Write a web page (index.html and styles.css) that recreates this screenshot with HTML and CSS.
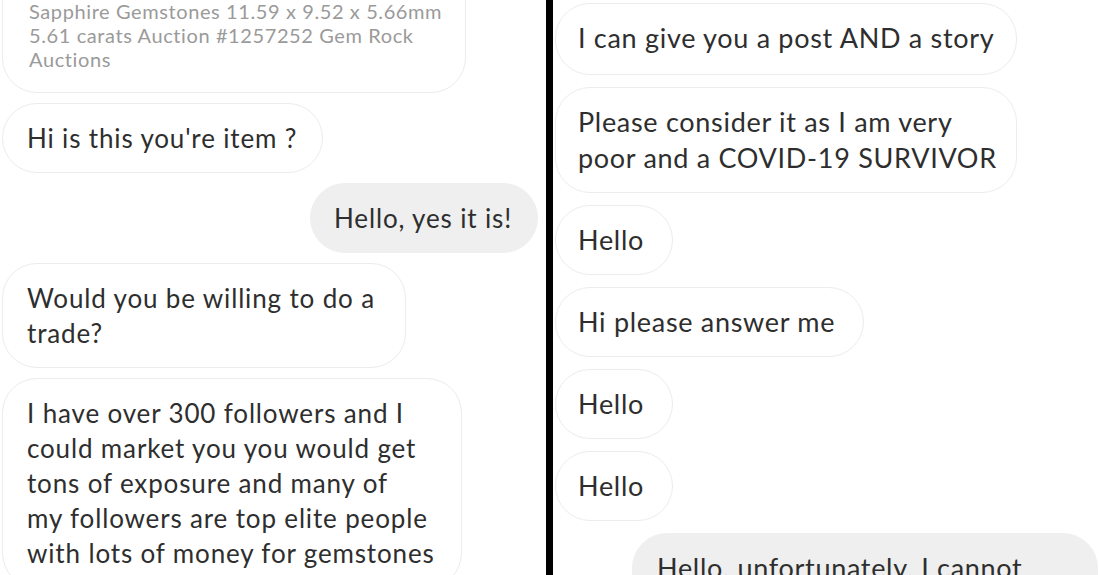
FILE: index.html
```html
<!DOCTYPE html>
<html>
<head>
<meta charset="utf-8">
<link rel="stylesheet" href="styles.css">
</head>
<body>
<div class="page">
  <section class="panel panel-left">
    <div class="thread">
      <div class="bubble in preview">
        <p>Sapphire Gemstones 11.59 x 9.52 x 5.66mm<br>5.61 carats Auction #1257252 Gem Rock<br>Auctions</p>
      </div>
      <div class="bubble in">Hi is this you're item ?</div>
      <div class="bubble out">Hello, yes it is!</div>
      <div class="bubble in w-trade">Would you be willing to do a<br>trade?</div>
      <div class="bubble in w-long">I have over 300 followers and I<br>could market you you would get<br>tons of exposure and many of<br>my followers are top elite people<br>with lots of money for gemstones</div>
    </div>
  </section>
  <div class="divider"></div>
  <section class="panel panel-right">
    <div class="thread thread-right">
      <div class="bubble in first">I can give you a post AND a story</div>
      <div class="bubble in w-consider">Please consider it as I am very<br>poor and a COVID-19 SURVIVOR</div>
      <div class="bubble in">Hello</div>
      <div class="bubble in">Hi please answer me</div>
      <div class="bubble in">Hello</div>
      <div class="bubble in">Hello</div>
      <div class="bubble out wide">Hello, unfortunately, I cannot<br>accept this offer.</div>
    </div>
  </section>
</div>
</body>
</html>
```
FILE: styles.css
```css
* { box-sizing: border-box; }
html, body {
  margin: 0;
  padding: 0;
  background: #fff;
  height: 575px;
  overflow: hidden;
}
.page {
  display: flex;
  height: 575px;
  font-family: Lato, "Open Sans", sans-serif;
  color: #2e2e2e;
}
.panel {
  overflow: hidden;
  height: 575px;
  background: #fff;
}
.panel-left {
  width: 546px;
  flex: none;
  padding-left: 2px;
  padding-right: 8px;
}
.divider {
  width: 7px;
  background: #000;
  flex: none;
}
.panel-right {
  flex: 1;
  padding-left: 2px;
  padding-right: 2px;
}
.thread {
  display: flex;
  flex-direction: column;
  align-items: flex-start;
  gap: 10px;
}
.thread-right { gap: 12px; }
.bubble {
  font-size: 26px;
  line-height: 35px;
  letter-spacing: 0.85px;
  white-space: nowrap;
  padding: 17px 25px 16px 24px;
  border-radius: 35px;
  border: 1px solid #ececec;
  background: #fff;
}
.bubble.out {
  align-self: flex-end;
  background: #efefef;
  border-color: #efefef;
  padding-left: 23px;
}
.preview {
  margin-top: -40px;
  width: 464px;
  padding: 38px 24px 21px 26px;
}
.preview p {
  margin: 0;
  font-size: 20px;
  line-height: 24px;
  letter-spacing: 0.6px;
  color: #9a9a9a;
}
.w-trade { width: 404px; }
.w-long { width: 460px; }
.thread-right .bubble {
  font-size: 27px;
  line-height: 36px;
  letter-spacing: 0.7px;
  padding: 16px 28px 16px 22px;
}
.thread-right .first {
  margin-top: 3px;
  width: 462px;
  padding-bottom: 18px;
}
.w-consider { width: 462px; }
.thread-right .wide {
  width: 466px;
  padding-left: 24px;
}
```
